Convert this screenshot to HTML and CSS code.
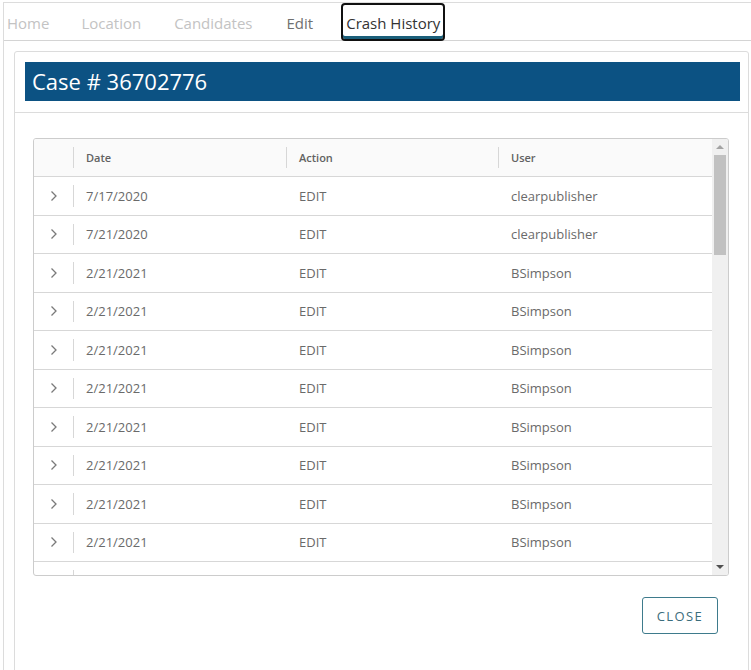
FILE: index.html
```html
<!DOCTYPE html>
<html lang="en">
<head>
    <meta charset="UTF-8">
    <meta name="viewport" content="width=device-width, initial-scale=1.0">
    <title>Case # 36702776 - Crash History</title>
    <link rel="stylesheet" href="styles.css">
</head>
<body>
    <div class="frame">
        <!-- Tabs -->
        <nav class="tabs">
            <span class="tab tab-muted">Home</span>
            <span class="tab tab-muted">Location</span>
            <span class="tab tab-muted">Candidates</span>
            <span class="tab tab-edit">Edit</span>
            <span class="tab tab-active">Crash History</span>
        </nav>

        <div class="card">
            <div class="card-header">
                <h2 class="case-title">Case # 36702776</h2>
            </div>
            <div class="card-body">
                <div class="datagrid">
                    <div class="grid-main">
                        <div class="grid-row grid-head">
                            <div class="cell cell-expand"></div>
                            <div class="cell cell-date">Date</div>
                            <div class="cell cell-action">Action</div>
                            <div class="cell cell-user">User</div>
                        </div>
                        <div class="grid-body" id="gridBody"></div>
                    </div>
                    <div class="scrollbar">
                        <div class="sb-arrow sb-up"></div>
                        <div class="sb-track"><div class="sb-thumb"></div></div>
                        <div class="sb-arrow sb-down"></div>
                    </div>
                </div>
                <div class="actions">
                    <button class="btn-close">CLOSE</button>
                </div>
            </div>
        </div>
    </div>

    <script>
        const history = [
            ['7/17/2020', 'EDIT', 'clearpublisher'],
            ['7/21/2020', 'EDIT', 'clearpublisher'],
            ['2/21/2021', 'EDIT', 'BSimpson'],
            ['2/21/2021', 'EDIT', 'BSimpson'],
            ['2/21/2021', 'EDIT', 'BSimpson'],
            ['2/21/2021', 'EDIT', 'BSimpson'],
            ['2/21/2021', 'EDIT', 'BSimpson'],
            ['2/21/2021', 'EDIT', 'BSimpson'],
            ['2/21/2021', 'EDIT', 'BSimpson'],
            ['2/21/2021', 'EDIT', 'BSimpson']
        ];
        const chevron = '<svg width="8" height="12" viewBox="0 0 8 12"><path d="M1.5 1.5 L6 6 L1.5 10.5" fill="none" stroke="#7a7a7a" stroke-width="1.3"/></svg>';
        const body = document.getElementById('gridBody');
        body.innerHTML = history.map(r => `
            <div class="grid-row">
                <div class="cell cell-expand">${chevron}</div>
                <div class="cell cell-date">${r[0]}</div>
                <div class="cell cell-action">${r[1]}</div>
                <div class="cell cell-user">${r[2]}</div>
            </div>`).join('') +
            // next row, scrolled out of view
            '<div class="grid-row"><div class="cell cell-expand"></div><div class="cell cell-date"></div></div>';
    </script>
</body>
</html>
```

FILE: styles.css
```css
* {
    margin: 0;
    padding: 0;
    box-sizing: border-box;
}
body {
    background: #fff;
    font-family: "Open Sans", Lato, sans-serif;
    color: #565656;
    padding: 2px 0 0 3px;
    overflow: hidden;
}
.frame {
    width: 770px;
    height: 700px;
    border-top: 1px solid #dcdcdc;
    border-left: 1px solid #dcdcdc;
}
.tabs {
    display: flex;
    height: 38px;
    align-items: flex-end;
    border-bottom: 1px solid #d4d4d4;
}
.tab {
    font-size: 15px;
    height: 37px;
    line-height: 40px;
    padding: 0 3px;
}
.tab-muted {
    color: #c3c3c3;
}
.tab:nth-child(2) { margin-left: 26px; }
.tab:nth-child(3) { margin-left: 27px; }
.tab:nth-child(4) { margin-left: 28px; }
.tab:nth-child(5) { margin-left: 25px; }
.tab-edit {
    color: #707070;
}
.tab-active {
    color: #333;
    border: 2px solid #111;
    border-radius: 4px;
    box-shadow: inset 0 -3px 0 #1b5f7a;
    line-height: 37px;
    margin-bottom: -1px;
    height: 38px;
}
.card {
    margin: 10px 0 0 10px;
    width: 735px;
    height: 640px;
    border: 1px solid #dcdcdc;
    border-radius: 3px;
}
.card-header {
    padding: 10px 8px 11px 10px;
    border-bottom: 1px solid #dcdcdc;
}
.case-title {
    background: #0c5283;
    color: #fff;
    font-weight: 400;
    font-size: 22px;
    height: 39px;
    line-height: 39px;
    padding-left: 7px;
}
.card-body {
    padding: 25px 19px 0 18px;
}
.datagrid {
    display: flex;
    height: 438px;
    border: 1px solid #cccccc;
    border-radius: 3px;
    overflow: hidden;
}
.grid-main {
    flex: 1;
    overflow: hidden;
}
.grid-row {
    display: flex;
    height: 38.5px;
    border-bottom: 1px solid #d7d7d7;
    font-size: 13px;
    color: #6a6a6a;
}
.grid-head {
    height: 38px;
    background: #fafafa;
    font-size: 11px;
    font-weight: 600;
    color: #626262;
}
.cell {
    position: relative;
    display: flex;
    align-items: center;
    padding-left: 13px;
}
.cell-expand {
    width: 39px;
    padding-left: 0;
    justify-content: center;
}
.cell-date { width: 213px; }
.cell-action { width: 212px; }
.cell-user { flex: 1; }
.cell-date::before,
.grid-head .cell-action::before,
.grid-head .cell-user::before {
    content: "";
    position: absolute;
    left: 0;
    top: 8px;
    bottom: 8px;
    border-left: 1px solid #d7d7d7;
}
.scrollbar {
    width: 16px;
    background: #f0f0f0;
    display: flex;
    flex-direction: column;
}
.sb-arrow {
    height: 16px;
    position: relative;
}
.sb-up::after,
.sb-down::after {
    content: "";
    position: absolute;
    left: 4px;
    border-left: 4px solid transparent;
    border-right: 4px solid transparent;
}
.sb-up::after {
    top: 6px;
    border-bottom: 4px solid #a3a3a3;
}
.sb-down::after {
    top: 6px;
    border-top: 4px solid #505050;
}
.sb-track {
    flex: 1;
    padding: 0 2px;
}
.sb-thumb {
    height: 100px;
    background: #c1c1c1;
}
.actions {
    display: flex;
    justify-content: flex-end;
    padding: 21px 11px 0 0;
}
.btn-close {
    width: 76px;
    height: 37px;
    background: #fff;
    border: 1px solid #3e7b8c;
    border-radius: 3px;
    color: #3b6d7c;
    font-family: "Open Sans", Lato, sans-serif;
    font-size: 13px;
    letter-spacing: 1.4px;
}
```
